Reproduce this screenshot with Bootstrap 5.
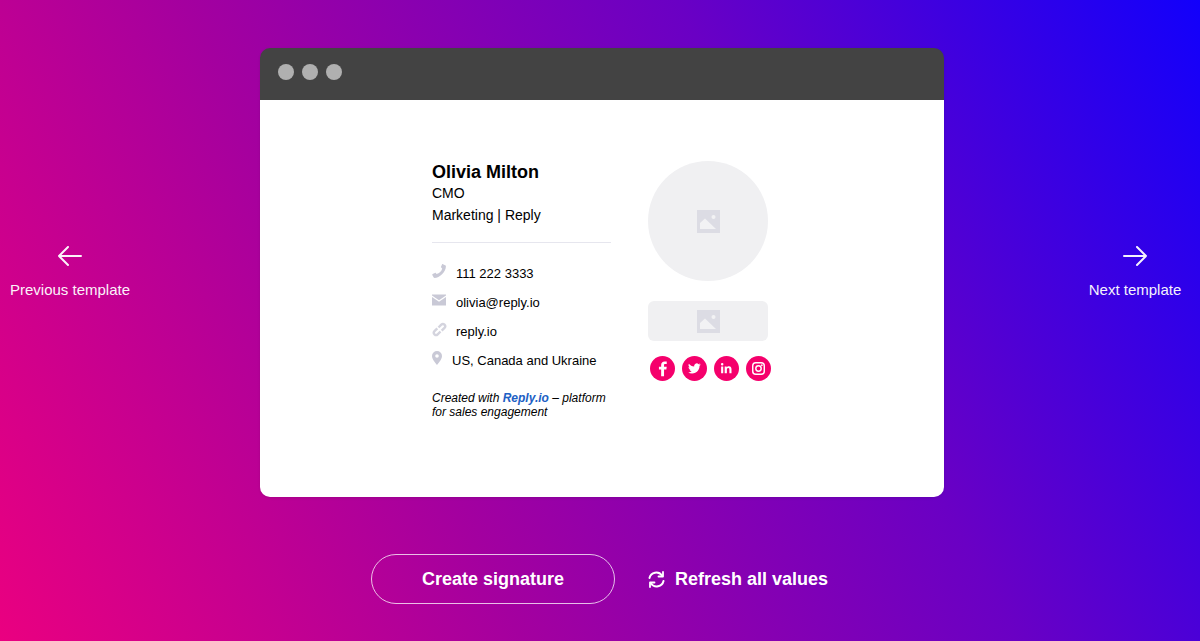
<!DOCTYPE html>
<html lang="en">
<head>
<meta charset="utf-8">
<title>Email signature templates</title>
<link href="https://cdn.jsdelivr.net/npm/bootstrap@5.3.0/dist/css/bootstrap.min.css" rel="stylesheet">
<style>
html,body{height:100%}
body{margin:0;font-family:"Liberation Sans",Arial,sans-serif;color:#000;overflow:hidden;
  background:linear-gradient(62deg,#ea0080 0%,#a4009f 34%,#6a00c4 66%,#1200fb 100%)}
.stage-top{padding-top:48px;height:497px}
.side-link{color:#fff;font-size:15px;line-height:18px;text-decoration:none;text-align:center;display:flex;flex-direction:column;align-items:center;gap:14px;opacity:.95}
.side-prev{width:140px;margin-top:197px}
.side-next{width:130px;margin-top:197px;margin-left:auto}
.win{width:684px;height:449px;margin-left:120px;background:transparent;border-radius:10px;box-shadow:0 1px 3px rgba(0,0,0,.1)}
.win-bar{height:52px;background:#434343;padding:0 0 4px 18px;gap:8px;border-radius:10px 10px 0 0}
.win-dot{width:16px;height:16px;border-radius:50%;background:#b0b0b0}
.sig{height:397px;background:#fff;border-radius:0 0 10px 10px;padding:62px 0 0 172px;gap:37px}
.sig-left{width:179px}
.sig-name{font-size:18px;line-height:20px;font-weight:700}
.sig-line{font-size:14px;line-height:22px}
.sig-rule{height:1px;background:#e6e6ee;margin:16px 0 16px}
.sig-row{height:29px;font-size:13px;line-height:22px}
.ico{width:14px;height:14px;flex:none;margin-right:10px;margin-top:-5px}
.ico-pin{width:10px;margin-right:10px}
.ico-link{width:15px;height:15px;margin-right:9px}
.sig-note{font-size:12px;line-height:14px;font-style:italic;margin-top:16px}
.sig-note a{color:#2060c4;font-weight:700;text-decoration:none}
.sig-right{width:125px;margin-top:-1px}
.ph-round{width:120px;height:120px;border-radius:50%;background:#f0f0f2}
.ph-logo{width:120px;height:40px;border-radius:6px;background:#f0f0f2;margin-top:20px}
.ph-ico{width:23px;height:23px}
.soc{gap:6px;margin-top:15px;padding-left:2px}
.soc-btn{width:25px;height:25px;flex:none;margin-right:1px}
.actions{margin-top:57px;padding-left:371px;gap:33px}
.btn-create{width:244px;height:50px;border:1px solid rgba(255,255,255,.75);border-radius:25px;color:#fff;font-size:18px;font-weight:700;background:transparent;padding:0}
.btn-create:hover{color:#fff}
.btn-refresh{color:#fff;font-size:18px;font-weight:700;gap:10px;background:transparent;border:0;padding:0}
.btn-refresh:hover{color:#fff}
</style>
</head>
<body>
<div class="stage-top d-flex align-items-start">
  <a class="side-link side-prev" href="#">
    <svg width="26" height="22" viewBox="0 0 26 22" fill="none" stroke="#fff" stroke-width="2" stroke-linecap="round" stroke-linejoin="round"><path d="M24 11H2M11 2l-9 9 9 9"/></svg>
    <span>Previous template</span>
  </a>
  <div class="win flex-none">
    <div class="win-bar d-flex align-items-center">
      <span class="win-dot"></span><span class="win-dot"></span><span class="win-dot"></span>
    </div>
    <div class="sig d-flex align-items-start">
      <div class="sig-left">
        <div class="sig-name">Olivia Milton</div>
        <div class="sig-line">CMO</div>
        <div class="sig-line">Marketing | Reply</div>
        <div class="sig-rule"></div>
        <div class="sig-row d-flex align-items-center">
          <svg class="ico" viewBox="0 0 14 14" fill="#c9c9d6"><path d="M13.600 1.600 11 .2c-.4-.2-.8 0-1 .3L9 2.800c-.1.3 0 .6.2.8l1 .9c-.6 2.700-2.900 5-5.600 5.600l-.9-1c-.2-.2-.5-.3-.8-.2l-2.300 1c-.3.2-.5.6-.3 1l1.400 2.600c.2.300.5.400.8.400C7.500 13.900 13.900 7.500 13.900 2.400c0-.3-.1-.6-.3-.8z"/></svg>
          <span>111 222 3333</span>
        </div>
        <div class="sig-row d-flex align-items-center">
          <svg class="ico" viewBox="0 0 14 14" fill="#c9c9d6"><path d="M0 1.500h14v1L7 7.200 0 2.500zM0 4l7 4.700L14 4v8.500H0z"/></svg>
          <span>olivia@reply.io</span>
        </div>
        <div class="sig-row d-flex align-items-center">
          <svg class="ico ico-link" viewBox="0 0 15 15" fill="none" stroke="#d4d4de" stroke-width="2.400"><path d="M6.500 5.500 9.300 2.700a2.300 2.300 0 0 1 3.200 0 2.300 2.300 0 0 1 0 3.200L9.700 8.700M8.500 9.500l-2.800 2.800a2.300 2.300 0 0 1-3.200 0 2.300 2.300 0 0 1 0-3.200L5.300 6.300"/></svg>
          <span>reply.io</span>
        </div>
        <div class="sig-row d-flex align-items-center">
          <svg class="ico ico-pin" viewBox="0 0 10 14" fill="#c9c9d6"><path fill-rule="evenodd" d="M5 0a5 5 0 0 0-5 5c0 3.500 5 9 5 9s5-5.500 5-9a5 5 0 0 0-5-5zm0 6.800a1.800 1.800 0 1 1 0-3.600 1.800 1.800 0 0 1 0 3.600z"/></svg>
          <span>US, Canada and Ukraine</span>
        </div>
        <div class="sig-note">Created with <a href="#">Reply.io</a> – platform for sales engagement</div>
      </div>
      <div class="sig-right">
        <div class="ph-round d-flex align-items-center justify-content-center">
          <svg class="ph-ico" viewBox="0 0 23 23"><rect width="23" height="23" fill="#dcdce4"/><path d="M3 19v-6l5-4.500 11 10.500z" fill="#f2f2f4"/><circle cx="16.500" cy="7" r="2" fill="#f2f2f4"/></svg>
        </div>
        <div class="ph-logo d-flex align-items-center justify-content-center">
          <svg class="ph-ico" viewBox="0 0 23 23"><rect width="23" height="23" fill="#dcdce4"/><path d="M3 19v-6l5-4.500 11 10.500z" fill="#f2f2f4"/><circle cx="16.500" cy="7" r="2" fill="#f2f2f4"/></svg>
        </div>
        <div class="soc d-flex">
          <svg class="soc-btn" viewBox="0 0 26 26"><circle cx="13" cy="13" r="13" fill="#f5006c"/><path d="M14.600 21v-7h2.400l.4-2.800h-2.800V9.500c0-.8.2-1.300 1.300-1.300h1.500V5.800c-.3 0-1.100-.1-2.200-.1-2.200 0-3.600 1.300-3.600 3.700v1.800H9.300V14h2.300v7z" fill="#fff"/></svg>
          <svg class="soc-btn" viewBox="0 0 26 26"><circle cx="13" cy="13" r="13" fill="#f5006c"/><path d="M20 8.500c-.5.200-1.100.4-1.700.5.600-.4 1-.9 1.300-1.600-.6.300-1.200.6-1.900.7a3 3 0 0 0-5.100 2.700c-2.500-.1-4.700-1.300-6.100-3.100-.8 1.400-.4 3.100.9 4-.5 0-.9-.1-1.300-.4 0 1.400 1 2.700 2.400 3-.4.100-.9.100-1.300 0 .4 1.200 1.500 2 2.800 2.100-1.300 1-2.900 1.400-4.400 1.200 1.300.9 2.900 1.300 4.600 1.300 5.600 0 8.800-4.700 8.600-9 .6-.4 1.100-.9 1.500-1.500z" fill="#fff" transform="translate(1.300 1.200) scale(.9)"/></svg>
          <svg class="soc-btn" viewBox="0 0 26 26"><circle cx="13" cy="13" r="13" fill="#f5006c"/><path d="M7.400 10.800h2.200V18H7.400zM8.500 7.300a1.300 1.300 0 1 1 0 2.600 1.300 1.300 0 0 1 0-2.600zM11.100 10.800h2.100v1c.4-.7 1.200-1.200 2.300-1.200 2.200 0 2.700 1.400 2.700 3.300V18H16v-3.600c0-.9-.1-1.900-1.200-1.900s-1.400.9-1.400 1.800V18h-2.300z" fill="#fff"/></svg>
          <svg class="soc-btn" viewBox="0 0 26 26"><circle cx="13" cy="13" r="13" fill="#f5006c"/><rect x="7" y="7" width="12" height="12" rx="3.200" fill="none" stroke="#fff" stroke-width="1.500"/><circle cx="13" cy="13" r="2.800" fill="none" stroke="#fff" stroke-width="1.500"/><circle cx="16.500" cy="9.500" r=".9" fill="#fff"/></svg>
        </div>
      </div>
    </div>
  </div>
  <a class="side-link side-next" href="#">
    <svg width="26" height="22" viewBox="0 0 26 22" fill="none" stroke="#fff" stroke-width="2" stroke-linecap="round" stroke-linejoin="round"><path d="M2 11h22M15 2l9 9-9 9"/></svg>
    <span>Next template</span>
  </a>
</div>
<div class="actions d-flex align-items-center">
  <button type="button" class="btn btn-create">Create signature</button>
  <button type="button" class="btn btn-refresh d-flex align-items-center">
    <svg width="17" height="17" viewBox="0 0 17 17" fill="none" stroke="#fff" stroke-width="2" stroke-linecap="round"><path d="M1.500 7A7 7 0 0 1 14 4.500M15.500 10A7 7 0 0 1 3 12.500"/><path d="M15 1v4.500h-4.500M2 16v-4.500h4.500" stroke-width="1.800" stroke-linejoin="round"/></svg>
    <span>Refresh all values</span>
  </button>
</div>
<script src="https://cdn.jsdelivr.net/npm/bootstrap@5.3.0/dist/js/bootstrap.bundle.min.js"></script>
</body>
</html>
